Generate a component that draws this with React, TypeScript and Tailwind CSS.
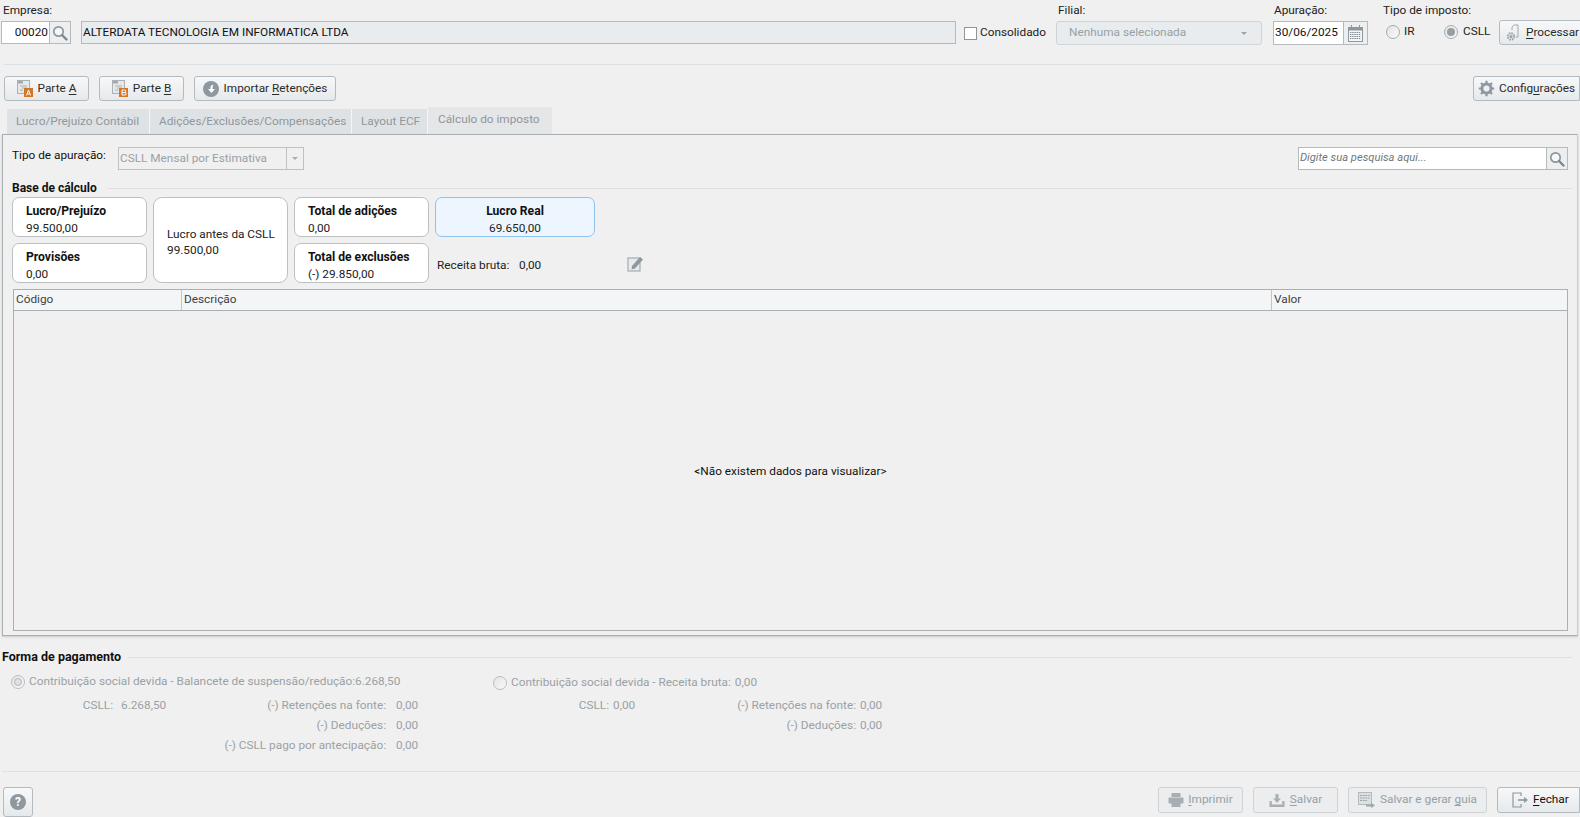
import React from "react";

const font = "[font-family:Roboto,'Liberation_Sans',sans-serif]";

function Btn({ className = "", children, disabled = false }: { className?: string; children: React.ReactNode; disabled?: boolean }) {
  return (
    <div
      className={`flex items-center justify-center rounded-[3px] border shrink-0 ${
        disabled ? "border-[#d0d3d5] bg-[#ebedef] text-[#97a0a5]" : "border-[#b4bbc0] bg-gradient-to-b from-[#f7f8f9] to-[#e6e9eb] text-[#2b2b2b]"
      } ${className}`}
    >
      {children}
    </div>
  );
}

function Search({ size = 16 }: { size?: number }) {
  return (
    <svg width={size} height={size} viewBox="0 0 16 16" fill="none">
      <circle cx="6.5" cy="6.5" r="4.7" stroke="#8d979d" strokeWidth="1.7" fill="#f5f7f8" />
      <path d="M10 10l4.5 4.5" stroke="#7d878d" strokeWidth="2.4" strokeLinecap="round" />
    </svg>
  );
}

function DocIcon({ letter }: { letter: string }) {
  return (
    <svg width="16" height="17" viewBox="0 0 16 17">
      <rect x="0.5" y="0.5" width="12" height="13" fill="#e6e8ea" stroke="#aab2b7" />
      <rect x="1" y="1" width="5" height="2.5" fill="#a2aaaf" />
      <path d="M3 6h7M5 8h5M3 10h3" stroke="#a9b1b6" />
      <rect x="7" y="8" width="9" height="9" fill="#d2762a" />
      <path d={letter === "A" ? "M9.5 15.5l2-5.5 2 5.5M10.3 14h2.4" : "M10 10h2.5a1.2 1.2 0 010 2.5H10zM10 12.5h3a1.2 1.2 0 010 2.5h-3z"} stroke="#fff" strokeWidth="1" fill="none" />
    </svg>
  );
}

function Radio({ checked = false, light = false }: { checked?: boolean; light?: boolean }) {
  return (
    <span className={`flex h-[14px] w-[14px] shrink-0 items-center justify-center rounded-full border ${light ? "border-[#b9bec1]" : "border-[#a5abaf]"} bg-gradient-to-br from-[#e2e3e4] to-[#fafafa]`}>
      {checked && (light ? <span className="h-[8px] w-[8px] rounded-full border border-[#b3b7ba] bg-[#dfe1e2]" /> : <span className="h-[8px] w-[8px] rounded-full bg-[#989ea2]" />)}
    </span>
  );
}

function Card({ title, value, className = "", center = false }: { title: string; value: string; className?: string; center?: boolean }) {
  return (
    <div className={`flex h-[40px] flex-col rounded-[7px] border ${center ? "items-center border-[#8fc3ee] bg-[#edf6fe]" : "border-[#bcc0c2] bg-white pl-[13px]"} ${className}`}>
      <span className="mt-[5px] text-[12.15px] leading-[17px] font-bold text-[#111]">{title}</span>
      <span className="leading-[16px] text-[#222]">{value}</span>
    </div>
  );
}

function U({ children }: { children: React.ReactNode }) {
  return <span className="underline underline-offset-2">{children}</span>;
}

export default function App() {
  return (
    <div className={`flex h-[817px] w-[1580px] flex-col overflow-hidden bg-[#f0f0f0] text-[11.8px] text-[#222] ${font}`}>
      {/* header */}
      <div className="flex h-[45px] shrink-0">
        <div className="flex w-[956px] shrink-0 flex-col pl-[1px]">
          <span className="h-[21px] pl-[2px] pt-[2px] leading-[16px]">Empresa:</span>
          <div className="flex h-[23px]">
            <div className="flex w-[49px] items-center justify-end border border-[#b4b9bc] bg-white pr-[1px] text-[#111]">00020</div>
            <div className="flex w-[21px] items-center justify-center border border-l-0 border-[#b4b9bc] bg-[#eceef0]"><Search /></div>
            <div className="ml-[10px] flex flex-1 items-center border border-[#b4b9bc] bg-[#e9ecee] pl-[1px] text-[#111]">ALTERDATA TECNOLOGIA EM INFORMATICA LTDA</div>
          </div>
        </div>
        <div className="ml-[8px] mt-[25px] flex h-[16px] w-[92px] shrink-0 items-center">
          <span className="h-[13px] w-[13px] border border-[#8f9598] bg-white" />
          <span className="ml-[3px]">Consolidado</span>
        </div>
        <div className="flex w-[206px] shrink-0 flex-col">
          <span className="h-[21px] pl-[2px] pt-[2px] leading-[16px]">Filial:</span>
          <div className="flex h-[24px] items-center justify-between rounded-[3px] border border-[#cfd4d7] bg-[#e9ecee] pl-[12px] pr-[14px] text-[#97a0a5]">
            Nenhuma selecionada
            <span className="h-0 w-0 border-x-[3px] border-t-[3px] border-x-transparent border-t-[#9aa3a8]" />
          </div>
        </div>
        <div className="ml-[11px] flex w-[95px] shrink-0 flex-col">
          <span className="h-[21px] pl-[1px] pt-[2px] leading-[16px]">Apuração:</span>
          <div className="flex h-[24px]">
            <div className="flex w-[71px] items-center border border-[#b4b9bc] bg-white pl-[1px] text-[#111]">30/06/2025</div>
            <div className="flex w-[24px] items-center justify-center border border-l-0 border-[#b4b9bc] bg-[#eceef0]">
              <svg width="15" height="17" viewBox="0 0 15 17">
                <rect x="0.5" y="2.5" width="14" height="14" fill="#f4f5f6" stroke="#8d979d" />
                <rect x="0.5" y="2.5" width="14" height="3" fill="#8d979d" />
                <path d="M3.5 0v3M11.5 0v3" stroke="#8d979d" />
                <path d="M2 7.5h11M2 9.5h11M2 11.5h11M2 13.5h11" stroke="#7d878d" strokeDasharray="1.4 0.8" />
              </svg>
            </div>
          </div>
        </div>
        <div className="ml-[15px] flex w-[116px] shrink-0 flex-col">
          <span className="h-[21px] pt-[2px] leading-[16px]">Tipo de imposto:</span>
          <div className="flex h-[22px] items-center pl-[3px]">
            <Radio />
            <span className="ml-[4px] w-[40px]">IR</span>
            <Radio checked />
            <span className="ml-[5px]">CSLL</span>
          </div>
        </div>
        <Btn className="mt-[20px] h-[25px] w-[85px] justify-start! rounded-r-none pl-[6px]">
          <svg width="16" height="18" viewBox="0 0 16 18" fill="none">
            <path d="M6 6V3l2-2h4v12h-2" stroke="#a2aaaf" />
            <circle cx="5" cy="12.5" r="3.2" stroke="#9aa3a8" strokeWidth="2" strokeDasharray="1.6 0.9" />
            <circle cx="5" cy="12.5" r="1.5" fill="#9aa3a8" />
          </svg>
          <span className="ml-[4px]"><U>P</U>rocessar</span>
        </Btn>
      </div>

      <div className="ml-[4px] mt-[19px] h-px shrink-0 bg-[#dee1e3]" />

      {/* toolbar */}
      <div className="ml-[4px] mt-[11px] flex h-[25px] shrink-0 gap-[10px]">
        <Btn className="w-[85px]"><DocIcon letter="A" /><span className="ml-[5px]">Parte <U>A</U></span></Btn>
        <Btn className="w-[85px]"><DocIcon letter="B" /><span className="ml-[5px]">Parte <U>B</U></span></Btn>
        <Btn className="w-[142px]">
          <svg width="16" height="16" viewBox="0 0 16 16">
            <circle cx="8" cy="8" r="8" fill="#8f989e" />
            <path d="M10.5 3.5a4.5 4.5 0 00-3 2v2.5H5l3.5 4L12 8H9.5c0-1.5.3-3 1-4.5z" fill="#fff" />
          </svg>
          <span className="ml-[5px]">Importar <U>R</U>etenções</span>
        </Btn>
        <Btn className="ml-auto w-[107px] justify-start! rounded-r-none pl-[4px]">
          <svg width="17" height="17" viewBox="0 0 17 17">
            <circle cx="8.5" cy="8.5" r="4.6" fill="none" stroke="#8f989e" strokeWidth="3" />
            <path d="M8.5 0.8v3M8.5 13.2v3M0.8 8.5h3M13.2 8.5h3M3 3l2.2 2.2M11.8 11.8L14 14M14 3l-2.2 2.2M5.2 11.8L3 14" stroke="#8f989e" strokeWidth="2.2" />
          </svg>
          <span className="ml-[4px]">Config<U>u</U>rações</span>
        </Btn>
      </div>

      {/* tabs */}
      <div className="ml-[7px] mt-[8px] flex h-[25px] shrink-0 items-end text-[11.8px] text-[#8f979c]">
        <div className="flex h-[25px] w-[143px] items-center border-r border-[#f4f5f5] bg-[#dfe2e4] pl-[9px]">Lucro/Prejuízo Contábil</div>
        <div className="flex h-[25px] w-[202px] items-center border-r border-[#f4f5f5] bg-[#dfe2e4] pl-[9px] whitespace-nowrap">Adições/Exclusões/Compensações</div>
        <div className="flex h-[25px] w-[76px] items-center border-r border-[#f4f5f5] bg-[#dfe2e4] pl-[9px]">Layout ECF</div>
        <div className="flex h-[27px] w-[124px] items-center bg-[#e4e6e8] pb-[2px] pl-[10px]">Cálculo do imposto</div>
      </div>

      {/* panel */}
      <div className="ml-[2px] mr-[2px] flex h-[502px] shrink-0 flex-col border border-[#a9b0b4] border-r-[#c9cdd0] shadow-[0_1px_2px_#c8c8c8]">
        <div className="flex h-[36px] shrink-0 items-start pl-[9px] pt-[12px]">
          <span className="w-[106px] leading-[16px] text-[#111]">Tipo de apuração:</span>
          <div className="flex h-[23px] w-[186px] border border-[#bcc1c4] text-[#9aa1a5]">
            <span className="flex flex-1 items-center pl-[1px]">CSLL Mensal por Estimativa</span>
            <span className="flex w-[17px] items-center justify-center border-l border-[#bcc1c4]">
              <span className="h-0 w-0 border-x-[3px] border-t-[3px] border-x-transparent border-t-[#a5adb2]" />
            </span>
          </div>
          <div className="ml-auto mr-[9px] flex h-[23px] w-[270px] border border-[#b4b9bc] bg-white">
            <span className="flex flex-1 items-center pl-[1px] text-[11.2px] text-[#6f777c] italic">Digite sua pesquisa aqui...</span>
            <span className="flex w-[21px] items-center justify-center border-l border-[#b4b9bc] bg-[#eceef0]"><Search /></span>
          </div>
        </div>

        <div className="mt-[9px] flex h-[16px] shrink-0 items-center pl-[9px]">
          <span className="text-[12px] font-bold text-[#111]">Base de cálculo</span>
          <span className="ml-[11px] mr-[5px] h-px flex-1 bg-[#dde0e2]" />
        </div>

        <div className="ml-[9px] mt-[1px] flex h-[86px] shrink-0 gap-[6px]">
          <div className="flex w-[135px] flex-col gap-[6px]">
            <Card title="Lucro/Prejuízo" value="99.500,00" />
            <Card title="Provisões" value="0,00" />
          </div>
          <div className="flex w-[135px] flex-col rounded-[9px] border border-[#bcc0c2] bg-white pl-[13px] pt-[28px] leading-[16px]">
            <span>Lucro antes da CSLL</span>
            <span>99.500,00</span>
          </div>
          <div className="flex w-[135px] flex-col gap-[6px]">
            <Card title="Total de adições" value="0,00" />
            <Card title="Total de exclusões" value="(-) 29.850,00" />
          </div>
          <div className="flex w-[160px] flex-col gap-[6px]">
            <Card title="Lucro Real" value="69.650,00" center />
            <div className="flex h-[40px] items-center pl-[2px] whitespace-nowrap text-[#222]">
              <span className="mt-[6px] w-[82px] shrink-0">Receita bruta:</span>
              <span className="mt-[6px] w-[26px] shrink-0">0,00</span>
              <svg className="ml-[82px] shrink-0" width="17" height="17" viewBox="0 0 17 17">
                <rect x="1" y="3" width="12" height="13" fill="#e8eaec" stroke="#a4acb1" strokeWidth="1.2" />
                <path d="M5 11l8-9 3 2.6-8 9-3.4 1z" fill="#8f989e" />
              </svg>
            </div>
          </div>
        </div>

        {/* table */}
        <div className="mb-[4px] ml-[10px] mr-[9px] mt-[6px] flex flex-1 flex-col border border-[#a9b0b4]">
          <div className="flex h-[21px] shrink-0 border-b border-[#a9b0b4] bg-[#f4f5f6] text-[#3c4246]">
            <span className="flex w-[168px] items-center border-r border-[#c0c5c8] pl-[2px]">Código</span>
            <span className="flex w-[1090px] items-center border-r border-[#c0c5c8] pl-[2px]">Descrição</span>
            <span className="flex flex-1 items-center pl-[2px]">Valor</span>
          </div>
          <div className="flex flex-1 items-center justify-center pt-[2px] text-[#111]">&lt;Não existem dados para visualizar&gt;</div>
        </div>
      </div>

      {/* pagamento */}
      <div className="mt-[13px] flex h-[16px] shrink-0 items-center pl-[2px]">
        <span className="text-[12.5px] font-bold text-[#111]">Forma de pagamento</span>
        <span className="ml-[7px] mr-[8px] h-px flex-1 bg-[#dde0e2]" />
      </div>

      <div className="mt-[8px] flex h-[80px] shrink-0 text-[#9aa1a5]">
        <div className="ml-[11px] flex w-[482px] flex-col">
          <div className="flex h-[20px] items-center">
            <Radio checked light />
            <span className="ml-[4px]">Contribuição social devida - Balancete de suspensão/redução:</span>
            <span>6.268,50</span>
          </div>
          <div className="mt-[4px] grid grid-cols-[102px_50px_223px_1fr] leading-[20px]">
            <span className="text-right">CSLL:</span>
            <span className="pl-[8px]">6.268,50</span>
            <span className="text-right">(-) Retenções na fonte:</span>
            <span className="pl-[10px]">0,00</span>
            <span /><span />
            <span className="text-right">(-) Deduções:</span>
            <span className="pl-[10px]">0,00</span>
            <span /><span />
            <span className="text-right">(-) CSLL pago por antecipação:</span>
            <span className="pl-[10px]">0,00</span>
          </div>
        </div>
        <div className="flex w-[400px] flex-col">
          <div className="flex h-[20px] items-center">
            <Radio light />
            <span className="ml-[4px]">Contribuição social devida - Receita bruta:</span>
            <span className="ml-[4px]">0,00</span>
          </div>
          <div className="mt-[2px] grid grid-cols-[116px_30px_217px_1fr] leading-[20px]">
            <span className="text-right">CSLL:</span>
            <span className="pl-[4px]">0,00</span>
            <span className="text-right">(-) Retenções na fonte:</span>
            <span className="pl-[4px]">0,00</span>
            <span /><span />
            <span className="text-right">(-) Deduções:</span>
            <span className="pl-[4px]">0,00</span>
          </div>
        </div>
      </div>

      <div className="ml-[2px] mt-[18px] h-px shrink-0 bg-[#dee1e3]" />

      {/* footer */}
      <div className="mt-[15px] flex h-[26px] shrink-0 items-start gap-[10px] pl-[3px]">
        <Btn className="mr-auto h-[30px] w-[30px]">
          <span className="flex h-[16px] w-[16px] items-center justify-center rounded-full bg-[#8f989e] text-[12px] leading-none font-bold text-white">?</span>
        </Btn>
        <Btn disabled className="h-[26px] w-[85px]">
          <svg width="16" height="16" viewBox="0 0 16 16" fill="#a8afb3">
            <rect x="3.5" y="1" width="9" height="4" />
            <rect x="0.5" y="5.5" width="15" height="6" rx="1" />
            <rect x="3.5" y="10" width="9" height="5" />
          </svg>
          <span className="ml-[4px]"><U>I</U>mprimir</span>
        </Btn>
        <Btn disabled className="h-[26px] w-[85px]">
          <svg width="16" height="16" viewBox="0 0 16 16" fill="#a8afb3">
            <path d="M0.5 9h2.3v3.6h10.4V9h2.3v6H0.5z" />
            <path d="M6.5 2h3v4.5H12l-4 4.3-4-4.3h2.5z" />
          </svg>
          <span className="ml-[5px]"><U>S</U>alvar</span>
        </Btn>
        <Btn disabled className="h-[26px] w-[139px]">
          <svg width="17" height="16" viewBox="0 0 17 16" fill="none">
            <rect x="0.5" y="0.5" width="13" height="12" fill="#dde0e2" stroke="#b4babe" />
            <path d="M2 3.5h10M2 6h10M2 8.5h7" stroke="#a0a7ab" strokeDasharray="2 0.6" />
            <path d="M8 12.5h5V10.5l4 3-4 2.5v-1.5H8z" fill="#a0a7ab" />
          </svg>
          <span className="ml-[5px]">Salvar e gerar <U>g</U>uia</span>
        </Btn>
        <Btn className="h-[26px] w-[83px] justify-start! rounded-r-none pl-[14px]">
          <svg width="16" height="16" viewBox="0 0 16 16" fill="none">
            <path d="M9 4V1H1v14h8v-3" stroke="#8f989e" strokeWidth="1.2" />
            <path d="M6 8h6" stroke="#8f989e" strokeWidth="1.6" />
            <path d="M12 5l4 3-4 3z" fill="#8f989e" />
          </svg>
          <span className="ml-[5px] text-[#111]"><U>F</U>echar</span>
        </Btn>
      </div>
    </div>
  );
}
